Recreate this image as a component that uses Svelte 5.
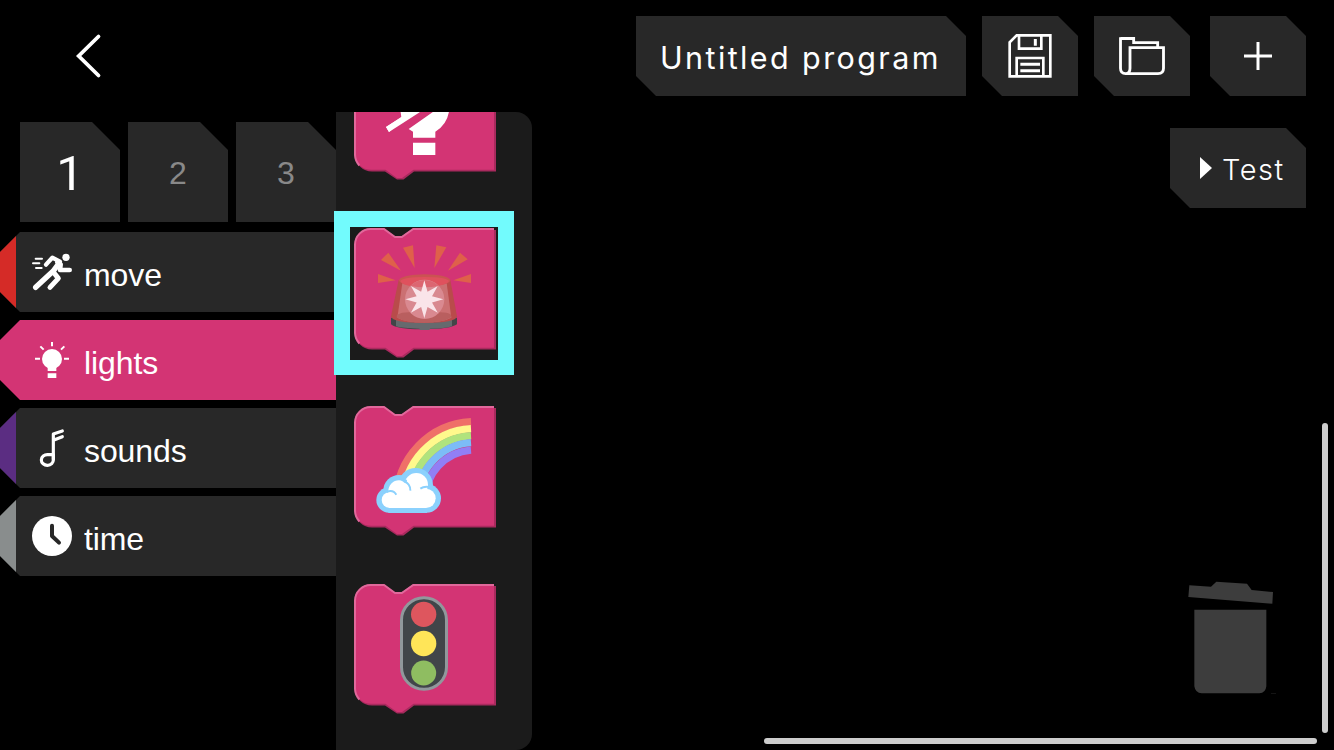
<script>
  const tabs = ['1', '2', '3'];
  const categories = [
    { name: 'move', color: '#d52b27' },
    { name: 'lights', color: '#d53574', active: true },
    { name: 'sounds', color: '#5b2d82' },
    { name: 'time', color: '#898d8d' }
  ];
  const blocks = ['off', 'siren', 'rainbow', 'traffic'];
  const bands = [
    [78.5, '#ef7068'],
    [71.5, '#fff98c'],
    [64.5, '#b0e37d'],
    [57.5, '#7cbcf7'],
    [50, '#917ff5']
  ];
  const star = Array.from({ length: 16 }, (_, i) => {
    const r = i % 2 ? 25 : 57;
    const a = (i * Math.PI) / 8;
    return `${283 + r * Math.sin(a)},${283 - r * Math.cos(a)}`;
  }).join(' ');
</script>

<div class="app">
  <header>
    <button class="back" aria-label="Back">
      <svg width="28" height="46" viewBox="0 0 28 46"><path d="M24.500 3.500 4.700 23 24.500 42.500" fill="none" stroke="#fff" stroke-width="3.8" stroke-linecap="round" /></svg>
    </button>
    <div class="actions">
      <div class="cut title"><span>Untitled program</span></div>
      <button class="cut square" aria-label="Save">
        <svg width="96" height="80" viewBox="36 33 288 240" fill="none" stroke="#fff" stroke-width="8">
          <path d="M140 91H241V214H119V112ZM147 92V131H214V92M140 214V159H220V214" />
          <path d="M196 102V122M151 178H210M151 197H210" stroke-width="9" />
        </svg>
      </button>
      <button class="cut square" aria-label="Open">
        <svg width="96" height="80" viewBox="372 33 288 240" fill="none" stroke="#fff" stroke-width="8.5">
          <path d="M451.500 100.500H491V113H563V128M451.500 97V190Q451.500 206 467 206H564Q580.500 206 580.500 190V128H480V190Q480 206 467 206" />
        </svg>
      </button>
      <button class="cut square add" aria-label="New">
        <svg width="96" height="80" viewBox="720 33 288 240"><path d="M822 153H906M864 111V195" stroke="#fff" stroke-width="9" /></svg>
      </button>
    </div>
  </header>

  <main>
    <aside>
      <nav class="tabs">
        {#each tabs as t, i}
          <button class="tab" class:current={i === 0}>{t}</button>
        {/each}
      </nav>
      {#each categories as c}
        <button class="category" class:active={c.active}>
          <span class="strip" style="background:{c.color}"></span>
          <svg class="icon" width="40" height="40" viewBox="96 0 120 120">
            {#if c.name === 'move'}
              <g transform="translate(0 -426)" fill="none" stroke="#fff" stroke-linecap="round" stroke-linejoin="round">
                <circle cx="198" cy="442" r="11" fill="#fff" stroke="none" />
                <path d="M138 464 157 443 180 455" stroke-width="13" />
                <path d="M172 456 182 463 180 480 209 480" stroke-width="14" />
                <path d="M174 464 159 484 107 532" stroke-width="16" />
                <path d="M160 486 175 505 150 532" stroke-width="15" />
                <path d="M107 446H126M99 460H118M108 474H125" stroke-width="6" />
              </g>
            {:else if c.name === 'lights'}
              <g transform="translate(0 -90)">
                <circle cx="156" cy="147" r="30" fill="#fff" />
                <path d="M143 170H169V183H143ZM143 190H169V204H143Z" fill="#fff" />
                <path d="M156 96V109M121 109 131 119M193 109 183 119M105 146H120M192 146H207" stroke="#fff" stroke-width="6" />
              </g>
            {:else if c.name === 'sounds'}
              <g transform="translate(0 -354)" fill="none" stroke="#fff" stroke-width="9.500" stroke-linecap="round" stroke-linejoin="round">
                <path d="M160 448V372L187 363M162 390 187 380" />
                <path d="M160 434H143A18 16 0 1 0 160 449V434" />
              </g>
            {:else}
              <g transform="translate(0 -618)">
                <circle cx="156" cy="678" r="60" fill="#fff" />
                <path d="M156 647V678L177 698" fill="none" stroke="#282828" stroke-width="12" stroke-linecap="round" stroke-linejoin="round" />
              </g>
            {/if}
          </svg>
          <span class="label">{c.name}</span>
        </button>
      {/each}
    </aside>

    <section class="flyout">
      <div class="list">
        {#each blocks as b}
          <svg width="144" height="132" viewBox="0 0 144 132">
            <path fill="#a92a5e" d="M17 2H30L42 11H48L60 2H142V121.500H60L49.500 129.500H43L31 121.500H18A17 17 0 0 1 1 105V17Z" />
            <path fill="#d33474" d="M16 .6H30L41 8.600H47.500L59 .6H140V119.800H59.500L48 128H43L31.500 119.800H17A16.500 16.500 0 0 1 .6 104V16A15.500 15.500 0 0 1 16 .6Z" />
            <path fill="none" stroke="#e1689b" stroke-width="2" d="M5.400 115.500A16 16 0 0 1 1 104V17A15.800 15.800 0 0 1 17 1H30L41 9H47.800L59.200 1H140" />
            {#if b === 'off'}
              <g transform="translate(-24 55) scale(.33333)" fill="#fff">
                <path d="M249 113H316V150H249ZM209 0H263L177 81 168 66 214 37ZM236 72 310 20 357 20Q350 60 316 80V98H249V80Z" />
                <path d="M168 66 260 6 269 22 177 81Z" />
              </g>
            {:else if b === 'siren'}
              <g transform="translate(-24 -23) scale(.33333)">
                <path fill="#df604a" d="M144 207V234L197 226ZM153 165 175 143 213 197ZM219 128 249 121 254 189ZM319 121 349 127 313 189ZM390 143 413 163 354 197ZM423 207V234L370 226Z" />
                <path fill="#434548" d="M183 338H381V358Q362 372 282 373T183 358Z" />
                <path fill="#666a6e" d="M198 345H366V364Q345 371 300 371L298 375H270L268 371Q215 370 198 364Z" />
                <path fill="#b94b4b" d="M206 225 183 334Q186 354 282 354T381 334L361 225Z" />
                <path fill="#cb7072" d="M217 234 202 338Q225 352 282 352T364 338L350 234Z" />
                <path fill="#b95f5f" d="M201 329Q217 321 240 322H326Q350 321 363 329L364 337Q340 353 282 353T200 337Z" />
                <ellipse cx="284" cy="226" rx="77" ry="18" fill="#ca5352" />
                <path fill="#df515d" d="M211 228Q220 216 284 216T357 228Q350 244 284 245T211 228Z" />
                <ellipse cx="284" cy="283" rx="59" ry="59" fill="#d98990" />
                <path fill="#dc6671" d="M241 243A59 59 0 0 1 326 243Q284 250 241 243Z" />
                <polygon points={star} fill="#fae4e9" />
              </g>
            {:else if b === 'rainbow'}
              <g fill="none" stroke-width="7.3">
                {#each bands as [r, color]}
                  <path stroke={color} d="M{121 - r} 94A{r} {r} 0 0 1 117 {94.1 - r}" />
                {/each}
              </g>
              <g transform="translate(-9 -11) scale(.33333)">
                <g fill="#8bd1fd">
                  <circle cx="132" cy="315" r="38" /><circle cx="162" cy="287" r="47" />
                  <circle cx="212" cy="271" r="52" /><circle cx="245" cy="310" r="43" />
                  <rect x="130" y="300" width="116" height="54" />
                </g>
                <g fill="#fff">
                  <circle cx="133" cy="315" r="23" /><circle cx="162" cy="288" r="32" />
                  <circle cx="214" cy="269" r="35" /><circle cx="243" cy="310" r="29" />
                  <rect x="131" y="285" width="112" height="54" /><circle cx="200" cy="285" r="25" />
                </g>
                <path fill="none" stroke="#8bd1fd" stroke-width="6" d="M124 291Q144 282 154 299M177 259Q197 266 196 287M226 281Q236 274 251 276" />
                <path fill="#8bd1fd" d="M167 256 186 254 185 266Z" />
              </g>
            {:else}
              <g transform="translate(-9 -9) scale(.33333)">
                <rect x="169.500" y="68" width="135" height="275" rx="67" fill="#414549" stroke="#91989c" stroke-width="9" />
                <circle cx="236" cy="118" r="38" fill="#de565e" />
                <circle cx="236" cy="205.500" r="38" fill="#ffe558" />
                <circle cx="236" cy="294" r="37.500" fill="#8fbd61" />
              </g>
            {/if}
          </svg>
        {/each}
      </div>
      <div class="highlight"></div>
    </section>

    <section class="workspace">
      <button class="cut test">
        <svg width="12" height="22" viewBox="0 0 12 22"><path d="M0 0 12 11 0 22Z" fill="#fff" /></svg>
        <span>Test</span>
      </button>
      <svg class="trash" width="88" height="114" viewBox="53 34 264 342" fill="#3d3d3d">
        <path d="M57 47 122 51 138 36 230 42 244 61 308 67 306 102 54 82ZM72 120H288V350Q286 370 267 371H94Q75 370 72 350Z" />
        <path d="M302 370H324V371H302Z" />
      </svg>
      <div class="bar vertical"></div>
      <div class="bar horizontal"></div>
    </section>
  </main>
</div>

<style>
  :global(body) { background: #000; overflow: hidden; }
  .app { width: 1334px; height: 750px; background: #000; color: #fff; overflow: hidden; font-family: "Liberation Sans", Arial, sans-serif; display: flex; flex-direction: column; }
  button { border: 0; padding: 0; margin: 0; background: none; color: inherit; font: inherit; }
  svg { display: block; flex: none; }
  header { height: 112px; flex: none; display: flex; justify-content: space-between; align-items: flex-start; padding: 16px 28px 0 74px; box-sizing: border-box; }
  .back { margin-top: 17px; }
  .actions { display: flex; gap: 16px; }
  .cut { height: 80px; background: #282828; clip-path: polygon(0 0, calc(100% - 20px) 0, 100% 20px, 100% 100%, 20px 100%, 0 60px); }
  .title { width: 330px; display: flex; align-items: center; padding-left: 24px; box-sizing: border-box; font: 400 30.500px Inter, sans-serif; letter-spacing: 2.400px; white-space: nowrap; }
  .title span { padding-top: 2px; }
  .square { width: 96px; }
  .add { margin-left: 4px; }
  main { display: flex; height: 638px; }
  aside { width: 336px; display: flex; flex-direction: column; gap: 8px; padding-top: 10px; box-sizing: border-box; }
  .tabs { display: flex; gap: 8px; padding-left: 20px; margin-bottom: 2px; }
  .tab { width: 100px; height: 100px; background: #282828; color: #898989; font-size: 32px; padding-top: 3px; clip-path: polygon(0 0, 72px 0, 100% 28px, 100% 100%, 0 100%); }
  .current { color: #fff; font: 400 49px Roboto, sans-serif; padding-right: 0; padding-top: 3px; }
  .category { height: 80px; display: flex; align-items: center; background: #282828; clip-path: polygon(20px 0, 100% 0, 100% 100%, 20px 100%, 0 60px, 0 20px); }
  .active { background: #d33474; }
  .strip { width: 16px; height: 80px; }
  .active .strip { visibility: hidden; }
  .icon { margin-left: 16px; }
  .label { margin-left: 12px; font-size: 32px; line-height: 36px; padding-top: 6px; letter-spacing: -.1px; }
  .flyout { position: relative; width: 196px; background: #1b1b1b; border-radius: 0 16px 16px 0; }
  .list { height: 638px; overflow: hidden; display: flex; flex-direction: column; gap: 46px; padding-left: 18px; box-sizing: border-box; }
  .list svg:first-child { margin-top: -62px; }
  .highlight { position: absolute; left: -2px; top: 99px; width: 180px; height: 164px; box-sizing: border-box; border: 16px solid #72fbfd; border-bottom-width: 15px; }
  .workspace { position: relative; flex: 1; padding: 16px 28px 0 0; display: flex; flex-direction: column; align-items: flex-end; }
  .test { width: 136px; display: flex; align-items: center; padding-left: 30px; gap: 10px; font: 300 29px Inter, sans-serif; letter-spacing: 1.500px; }
  .test span { padding-top: 2px; }
  .trash { margin: 373px 30px 0 0; }
  .bar { position: absolute; background: #cdcdcd; border-radius: 3px; }
  .vertical { right: 6px; top: 311px; width: 6px; height: 310px; }
  .horizontal { right: 17px; bottom: 6px; width: 553px; height: 6px; }
</style>
